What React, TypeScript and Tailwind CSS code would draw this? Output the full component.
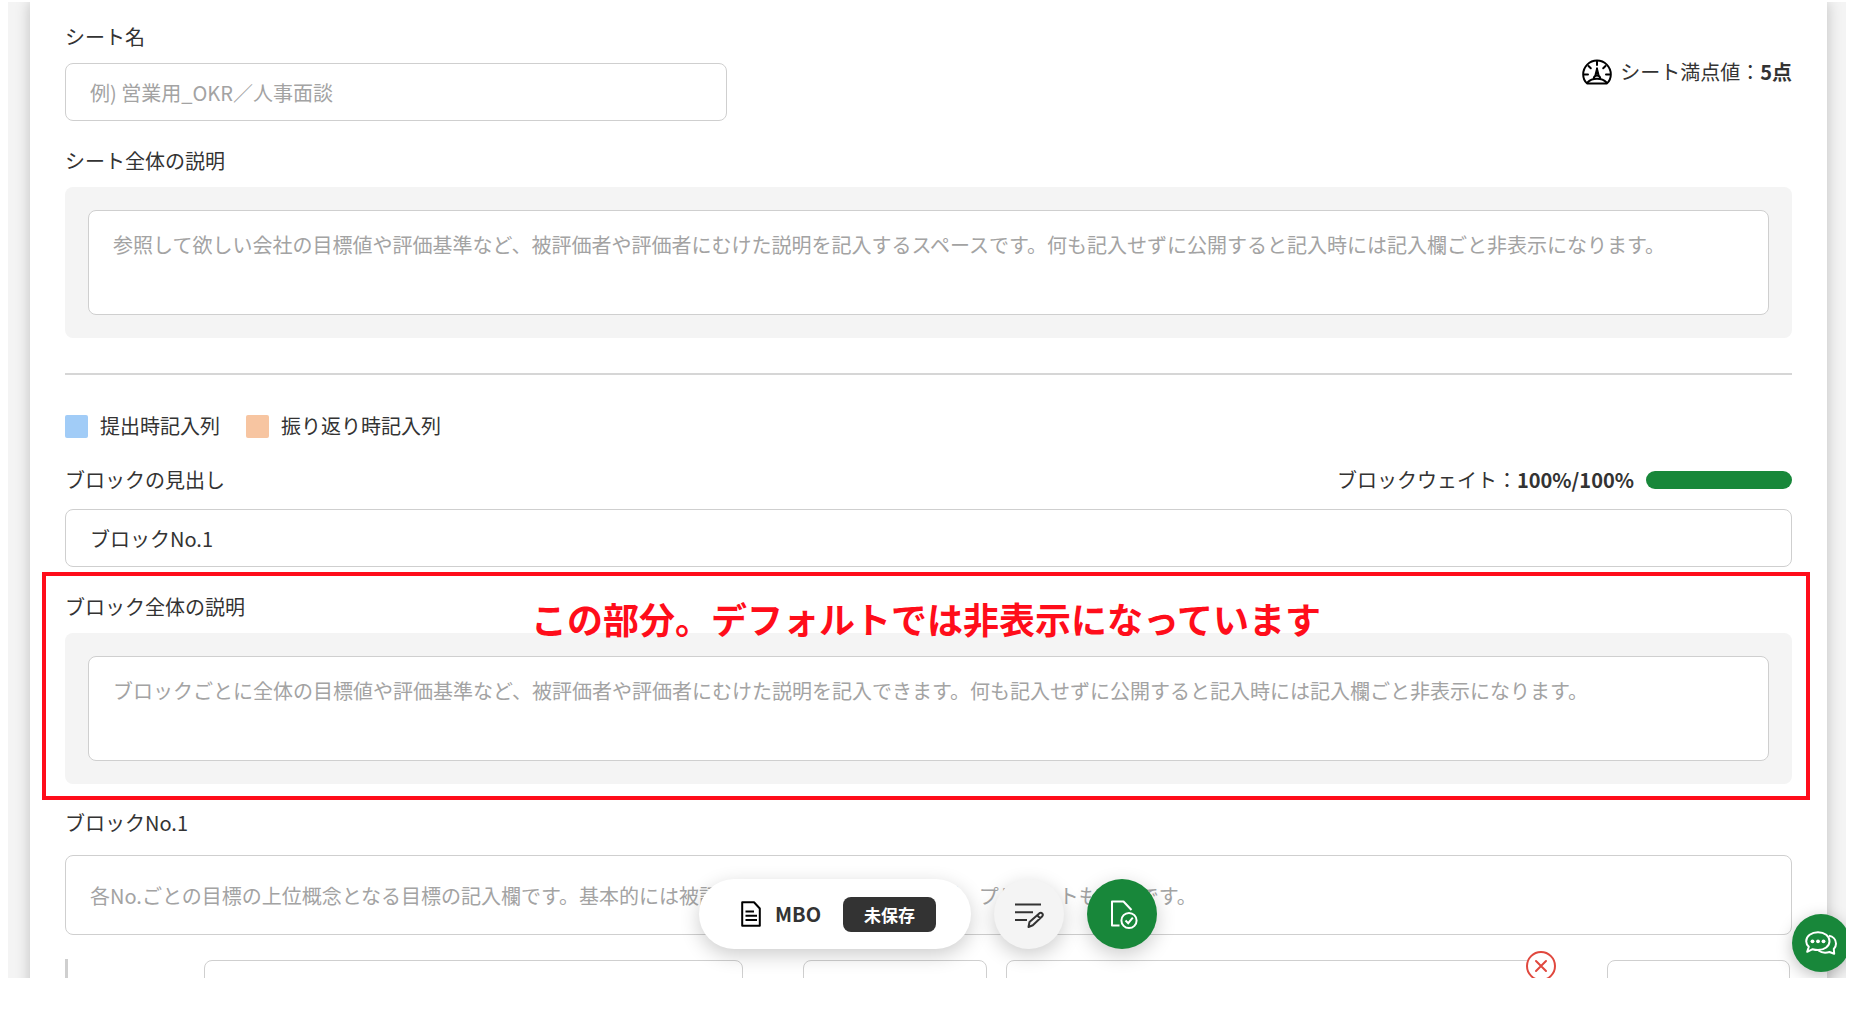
import type { ReactNode } from "react";

const field =
  "block w-full rounded-lg border border-[#cfcfcf] bg-white px-6 text-[20px] leading-7 text-[#333] placeholder:text-[#a3a3a3] placeholder:opacity-100 outline-none";

function GaugeIcon() {
  return (
    <svg className="h-[26px] w-[30px]" viewBox="0 0 30 26" fill="none" stroke="#000" strokeWidth="2" strokeLinecap="round" aria-hidden="true">
      <path d="M5 24.400C2.500 22 1.200 19 1.200 15.400A13.800 13.800 0 0 1 28.800 15.400C28.800 19 27.500 22 25 24.400Z" strokeLinejoin="round" />
      <path d="M15 2.500V6M2.500 15.400H6M27.500 15.400H24M8.800 9.300L6.500 7M21.200 9.300L23.500 7M15 9.500V15" />
      <path d="M13.300 15.700L15 9L16.700 15.700" strokeWidth="1.500" />
      <path d="M11.800 19A3.300 3.300 0 0 1 18.200 19" />
      <path d="M5.500 23.500C10 18.500 20 18.500 24.500 23.500" />
    </svg>
  );
}

function DocumentIcon() {
  return (
    <svg className="h-7 w-5" viewBox="0 0 20 28" fill="none" stroke="#000" strokeWidth="2" aria-hidden="true">
      <path d="M1.200 2.200H13L18.800 8.500V25.800H1.200Z" strokeLinejoin="round" />
      <path d="M4.500 11.500H13M4.500 15.700H16M4.500 20H16" />
    </svg>
  );
}

function EditListIcon() {
  return (
    <svg className="h-7 w-8" viewBox="0 0 32 28" fill="none" stroke="#333" strokeWidth="2" aria-hidden="true">
      <path d="M2 4.500H28M2 12.200H20M2 20H14" />
      <path d="M15.500 27L16.500 22L26.500 13.200C28.500 12 30.800 14.200 29.300 16.200L19.800 25.300ZM24 15.200L27.500 18.500" strokeWidth="2" strokeLinejoin="round" />
    </svg>
  );
}

function SaveDocumentIcon() {
  return (
    <svg className="h-8 w-7" viewBox="0 0 28 32" fill="none" stroke="#fff" strokeWidth="2" aria-hidden="true">
      <path d="M9.500 27.500H2V3.500H13.500L21.500 12" strokeLinejoin="round" />
      <circle cx="19" cy="22.500" r="7.600" />
      <path d="M15.500 22.500L18.200 25.200L22.800 19.700" />
    </svg>
  );
}

function ChatIcon() {
  return (
    <svg className="h-6 w-8" viewBox="0 0 32 24" fill="none" stroke="#fff" strokeWidth="2" strokeLinejoin="round" aria-hidden="true">
      <path d="M13 1.200C19.500 1.200 24.500 5 24.500 10.200C24.500 15.300 19.500 19 13 19C11 19 9.200 18.700 7.600 18.200L2.200 20.800L3.800 15.800C2.200 14.200 1.200 12.300 1.200 10.200C1.200 5 6.500 1.200 13 1.200Z" />
      <path d="M24 4.800C28 5.500 31 8.700 31 12.700C31 14.700 30.200 16.500 28.800 18L29.200 22.800L24.500 21C20.500 22.300 16.500 21.800 13.500 19.500" />
      <g fill="#fff" stroke="none">
        <circle cx="7.500" cy="10.300" r="1.900" />
        <circle cx="13" cy="10.300" r="1.900" />
        <circle cx="18.500" cy="10.300" r="1.900" />
      </g>
    </svg>
  );
}

function Description({ id, label, placeholder }: { id: string; label: string; placeholder: string }) {
  return (
    <>
      <label htmlFor={id} className="block">
        {label}
      </label>
      <div className="mt-3 rounded-lg bg-[#f4f4f4] p-[23px]">
        <textarea id={id} placeholder={placeholder} className={`${field} h-[105px] resize-none py-5`} />
      </div>
    </>
  );
}

function Legend({ swatch, children }: { swatch: string; children: ReactNode }) {
  return (
    <span className="flex items-center gap-3">
      <span className={`size-[23px] rounded-xs ${swatch}`} />
      {children}
    </span>
  );
}

export default function App() {
  return (
    <div className="h-screen overflow-hidden bg-white pt-[2px] pr-1 pb-9 pl-2 font-['Noto_Sans_CJK_JP',sans-serif] text-[20px] leading-7 text-[#333]">
      <div className="relative h-full overflow-hidden bg-[#f4f4f4] pr-[19px] pl-[22px]">
        <main className="min-h-full bg-white px-[35px] pt-[21px] shadow-[0_0_14px_rgba(0,0,0,0.22)]">
          <div className="flex items-center justify-between">
            <div className="w-[662px]">
              <label htmlFor="sheet-name" className="block">
                シート名
              </label>
              <input id="sheet-name" placeholder="例) 営業用_OKR／人事面談" className={`${field} mt-3 h-[58px]`} />
            </div>
            <p className="flex items-center gap-2">
              <GaugeIcon />
              <span>
                シート満点値：<b>5点</b>
              </span>
            </p>
          </div>

          <section className="mt-[26px]">
            <Description
              id="sheet-description"
              label="シート全体の説明"
              placeholder="参照して欲しい会社の目標値や評価基準など、被評価者や評価者にむけた説明を記入するスペースです。何も記入せずに公開すると記入時には記入欄ごと非表示になります。"
            />
          </section>

          <hr className="mt-[35px] border-t-2 border-[#d6d6d6]" />

          <div className="mt-[37px] flex gap-[26px]">
            <Legend swatch="bg-[#a1ccf7]">提出時記入列</Legend>
            <Legend swatch="bg-[#f7c5a1]">振り返り時記入列</Legend>
          </div>

          <div className="mt-[26px] flex items-center justify-between">
            <label htmlFor="block-title">ブロックの見出し</label>
            <div className="flex items-center gap-3">
              <span>
                ブロックウェイト：<b>100%/100%</b>
              </span>
              <div role="progressbar" aria-label="ブロックウェイト" aria-valuenow={100} className="h-[18px] w-[146px] rounded-full bg-[#18873a]" />
            </div>
          </div>
          <input id="block-title" defaultValue="ブロックNo.1" className={`${field} mt-[15px] h-[58px]`} />

          <section className="relative mt-[26px]">
            <Description
              id="block-description"
              label="ブロック全体の説明"
              placeholder="ブロックごとに全体の目標値や評価基準など、被評価者や評価者にむけた説明を記入できます。何も記入せずに公開すると記入時には記入欄ごと非表示になります。"
            />
            <div className="pointer-events-none absolute -top-[21px] -right-[18px] -bottom-4 -left-[23px] border-4 border-[#ff0d1a] pt-4 text-center text-[36px] leading-[52px] font-bold text-[#ff0d1a]">
              この部分。デフォルトでは非表示になっています
            </div>
          </section>

          <label htmlFor="block-goal" className="mt-[25px] block">
            ブロックNo.1
          </label>
          <input
            id="block-goal"
            placeholder="各No.ごとの目標の上位概念となる目標の記入欄です。基本的には被評価者が記入する箇所ですが、プリセットも可能です。"
            className={`${field} mt-[18px] h-20`}
          />

          <div className="mt-6 flex items-start border-l-[3px] border-[#cfcfcf] pt-px">
            <div className="ml-[136px] flex-[539]">
              <input aria-label="目標" className={`${field} h-[58px]`} />
            </div>
            <div className="ml-[60px] flex-[184]">
              <input aria-label="ウェイト" className={`${field} h-[58px]`} />
            </div>
            <div className="relative ml-[19px] flex-[535]">
              <input aria-label="達成基準" className={`${field} h-[58px]`} />
              <button aria-label="削除" className="absolute -top-[9px] -right-[15px] size-[30px] rounded-full bg-white">
                <svg viewBox="0 0 30 30" fill="none" stroke="#e0483e" strokeWidth="2" aria-hidden="true">
                  <circle cx="15" cy="15" r="14" />
                  <path d="M10 10L20 20M20 10L10 20" strokeLinecap="round" />
                </svg>
              </button>
            </div>
            <div className="mr-[2px] ml-[66px] flex-[183]">
              <input aria-label="評価" className={`${field} h-[58px]`} />
            </div>
          </div>
        </main>

        <div className="pointer-events-none absolute inset-x-0 bottom-[29px] flex justify-center gap-[23px] pl-[2px]">
          <div className="pointer-events-auto flex h-[70px] items-center rounded-full bg-white pr-[35px] pl-[42px] shadow-[0_6px_20px_rgba(0,0,0,0.2)]">
            <DocumentIcon />
            <span className="ml-[14px] font-bold">MBO</span>
            <span className="ml-[22px] rounded-lg bg-[#333] px-[21px] py-1 text-[17px] leading-[27px] font-bold text-white">未保存</span>
          </div>
          <button aria-label="編集" className="pointer-events-auto flex size-[70px] items-center justify-center rounded-full bg-[#f4f4f4] shadow-[0_6px_20px_rgba(0,0,0,0.2)]">
            <EditListIcon />
          </button>
          <button aria-label="保存" className="pointer-events-auto flex size-[70px] items-center justify-center rounded-full bg-[#18873a] pl-1 shadow-[0_6px_20px_rgba(0,0,0,0.2)]">
            <SaveDocumentIcon />
          </button>
        </div>

        <button aria-label="チャット" className="absolute -right-1 bottom-[6px] flex size-[58px] items-center justify-center rounded-full bg-[#18873a] shadow-[0_4px_16px_rgba(0,0,0,0.25)]">
          <ChatIcon />
        </button>
      </div>
    </div>
  );
}
